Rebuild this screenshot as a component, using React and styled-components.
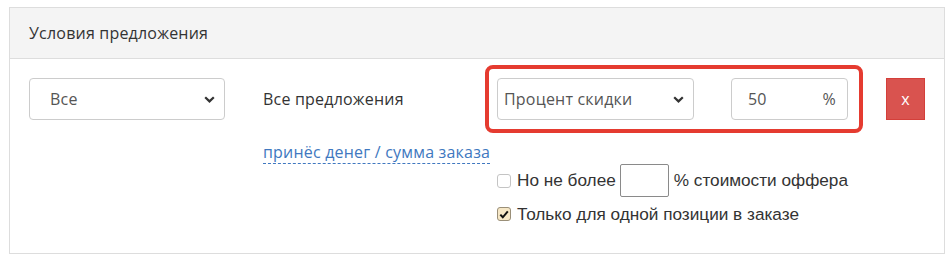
import React from "react";
import styled, { createGlobalStyle } from "styled-components";

const GlobalStyle = createGlobalStyle`
  html, body {
    margin: 0;
    padding: 0;
    background: #fff;
  }
  body {
    font-family: "Open Sans", "Noto Sans", sans-serif;
    letter-spacing: 0.2px;
    color: #333;
  }
`;

const Panel = styled.div`
  margin: 7px 0 0 9px;
  width: 936px;
  height: 247px;
  box-sizing: border-box;
  border: 1px solid #ddd;
  background: #fff;
`;

const PanelHeader = styled.div`
  height: 51px;
  box-sizing: border-box;
  background: #f4f4f4;
  border-bottom: 1px solid #ddd;
  padding: 0 19px;
  display: flex;
  align-items: center;
  font-size: 16px;
  color: #333;
`;

const PanelBody = styled.div`
  padding: 6px 19px 0;
`;

const TopRow = styled.div`
  display: flex;
  align-items: flex-start;
`;

const FakeSelect = styled.div`
  width: ${(p) => p.$width}px;
  height: 42px;
  box-sizing: border-box;
  margin-top: ${(p) => p.$top || 0}px;
  border: 1px solid #ccc;
  border-radius: 4px;
  background: #fff;
  display: flex;
  align-items: center;
  justify-content: space-between;
  padding: 0 9px 0 ${(p) => p.$pad}px;
  font-size: 16px;
  color: #555;
  flex-shrink: 0;
`;

const Chevron = () => (
  <svg width="11" height="7" viewBox="0 0 11 7">
    <path d="M1.2 1.2 L5.5 5.4 L9.8 1.2" fill="none" stroke="#333" strokeWidth="2.2" />
  </svg>
);

const Caption = styled.div`
  width: 222px;
  margin: 13px 0 0 38px;
  line-height: 42px;
  font-size: 16px;
  color: #333;
  flex-shrink: 0;
`;

const Highlight = styled.div`
  width: 378px;
  height: 68px;
  box-sizing: border-box;
  border: 4px solid #e53b30;
  border-radius: 8px;
  padding: 9px 11px 0 8px;
  display: flex;
  justify-content: space-between;
  flex-shrink: 0;
`;

const PercentInput = styled.div`
  width: 117px;
  height: 42px;
  box-sizing: border-box;
  border: 1px solid #ccc;
  border-radius: 4px;
  display: flex;
  align-items: center;
  justify-content: space-between;
  padding: 0 11px 0 16px;
  font-size: 16px;
  color: #555;
`;

const RemoveButton = styled.button`
  margin: 13px 0 0 23px;
  width: 41px;
  height: 42px;
  border: 1px solid #d43f3a;
  border-radius: 0;
  background: #d9534f;
  color: #fff;
  font-family: inherit;
  font-size: 16px;
  padding: 0;
  line-height: 1;
`;

const LinkRow = styled.div`
  padding-left: 234px;
  margin-top: 8px;
`;

const DashedLink = styled.a`
  display: inline-block;
  font-size: 16px;
  line-height: 22px;
  color: #4078c0;
  text-decoration: none;
  border-bottom: 1px dashed #4078c0;
  white-space: nowrap;
`;

const Options = styled.div`
  padding-left: 468px;
  font-family: "Liberation Sans", Arial, sans-serif;
  letter-spacing: 0;
  font-size: 17.2px;
  color: #333;
`;

const OptionRow = styled.label`
  display: flex;
  align-items: center;
  height: ${(p) => p.$h}px;
  margin-top: ${(p) => p.$mt || 0}px;
  white-space: nowrap;
`;

const Box = styled.span`
  width: 14px;
  height: 14px;
  box-sizing: border-box;
  border: 1px solid ${(p) => (p.$checked ? "#9a8f78" : "#c4c4c4")};
  border-radius: 3px;
  background: ${(p) => (p.$checked ? "#f6e7c6" : "#fff")};
  margin-right: 6px;
  display: flex;
  align-items: center;
  justify-content: center;
  flex-shrink: 0;
`;

const SmallInput = styled.span`
  display: inline-block;
  width: 49px;
  height: 33px;
  box-sizing: border-box;
  border: 1px solid #8a8a8a;
  border-radius: 2px;
  margin: 0 5px 0 4px;
`;

const Check = () => (
  <svg width="10" height="9" viewBox="0 0 10 9">
    <path d="M1.3 4.6 L3.8 7.3 L8.8 1.3" fill="none" stroke="#111" strokeWidth="2" />
  </svg>
);

export default function App() {
  return (
    <>
      <GlobalStyle />
      <Panel>
        <PanelHeader>Условия предложения</PanelHeader>
        <PanelBody>
          <TopRow>
            <FakeSelect $width={196} $top={13} $pad={20}>
              <span>Все</span>
              <Chevron />
            </FakeSelect>
            <Caption>Все предложения</Caption>
            <Highlight>
              <FakeSelect $width={197} $pad={6}>
                <span>Процент скидки</span>
                <Chevron />
              </FakeSelect>
              <PercentInput>
                <span>50</span>
                <span>%</span>
              </PercentInput>
            </Highlight>
            <RemoveButton>x</RemoveButton>
          </TopRow>
          <LinkRow>
            <DashedLink href="#">принёс денег / сумма заказа</DashedLink>
          </LinkRow>
          <Options>
            <OptionRow $h={33}>
              <Box />
              Но не более
              <SmallInput />
              % стоимости оффера
            </OptionRow>
            <OptionRow $h={20} $mt={7}>
              <Box $checked>
                <Check />
              </Box>
              Только для одной позиции в заказе
            </OptionRow>
          </Options>
        </PanelBody>
      </Panel>
    </>
  );
}
